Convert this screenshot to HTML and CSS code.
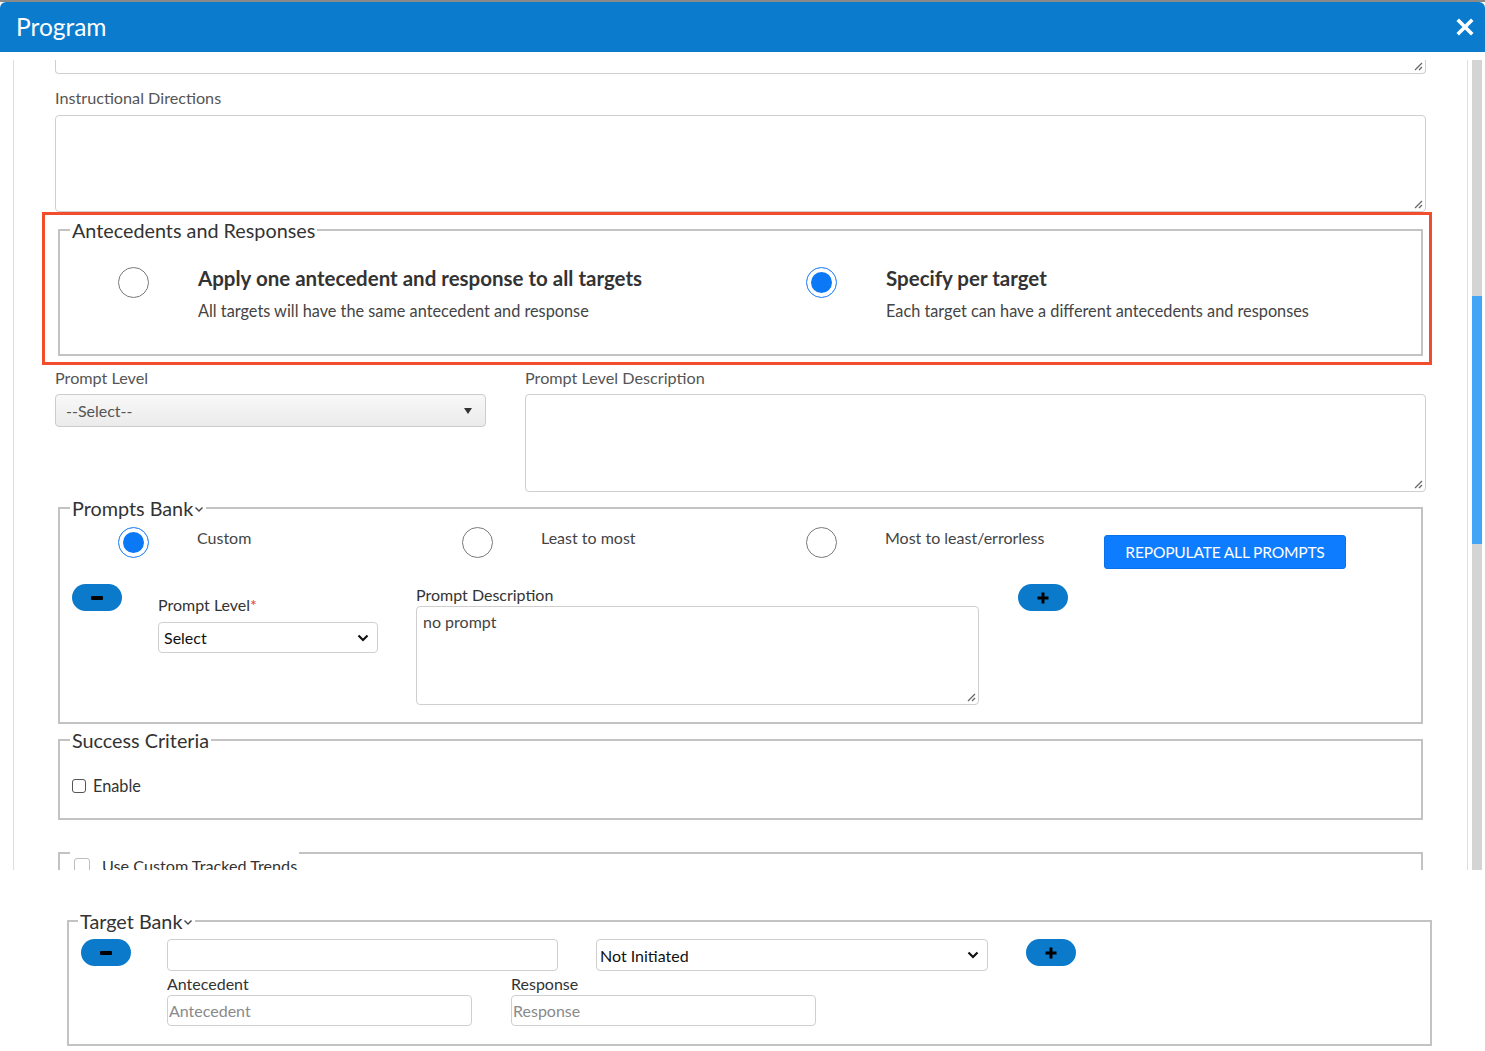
FILE: index.html
```html
<!DOCTYPE html>
<html lang="en">
<head>
<meta charset="utf-8">
<title>Program</title>
<link rel="stylesheet" href="styles.css">
</head>
<body>
<div class="top-strip"></div>
<header class="modal-header">
  <h1 class="modal-title">Program</h1>
  <button class="close-btn" aria-label="Close">
    <svg width="18" height="18" viewBox="0 0 18 18"><path d="M3 3L15 15M15 3L3 15" stroke="#fff" stroke-width="3.6" stroke-linecap="square"/></svg>
  </button>
</header>

<div class="modal-body">
  <div class="scroll-view">
    <div class="scroll-content">
      <div class="textarea partial">
        <svg class="grip" width="10" height="10" viewBox="0 0 10 10"><path d="M9 2L2 9M9 6L6 9" stroke="#666" stroke-width="1.3"/></svg>
      </div>

      <label class="field-label first">Instructional Directions</label>
      <div class="textarea directions">
        <svg class="grip" width="10" height="10" viewBox="0 0 10 10"><path d="M9 2L2 9M9 6L6 9" stroke="#666" stroke-width="1.3"/></svg>
      </div>

      <div class="highlight-wrap">
        <fieldset class="group ante">
          <legend>Antecedents and Responses</legend>
          <div class="ante-options">
            <div class="ante-option">
              <span class="radio"></span>
              <div class="ante-text">
                <div class="ante-title">Apply one antecedent and response to all targets</div>
                <div class="ante-sub">All targets will have the same antecedent and response</div>
              </div>
            </div>
            <div class="ante-option">
              <span class="radio checked"></span>
              <div class="ante-text">
                <div class="ante-title">Specify per target</div>
                <div class="ante-sub">Each target can have a different antecedents and responses</div>
              </div>
            </div>
          </div>
        </fieldset>
        <div class="highlight"></div>
      </div>

      <div class="prompt-level-row">
        <div class="pl-col">
          <label class="field-label">Prompt Level</label>
          <div class="select-grey"><span>--Select--</span><span class="tri"></span></div>
        </div>
        <div class="pld-col">
          <label class="field-label">Prompt Level Description</label>
          <div class="textarea pld">
            <svg class="grip" width="10" height="10" viewBox="0 0 10 10"><path d="M9 2L2 9M9 6L6 9" stroke="#666" stroke-width="1.3"/></svg>
          </div>
        </div>
      </div>

      <fieldset class="group prompts">
        <legend>Prompts Bank<svg class="legend-chev" width="10" height="7" viewBox="0 0 10 7"><path d="M1.5 1.5L5 5L8.5 1.5" fill="none" stroke="#444" stroke-width="1.4"/></svg></legend>
        <div class="pb-radios">
          <div class="pb-option"><span class="radio checked"></span><span class="pb-label">Custom</span></div>
          <div class="pb-option"><span class="radio"></span><span class="pb-label">Least to most</span></div>
          <div class="pb-option"><span class="radio"></span><span class="pb-label">Most to least/errorless</span></div>
          <button class="repop-btn">REPOPULATE ALL PROMPTS</button>
        </div>
        <div class="pb-row">
          <span class="pill"><span class="minus-bar"></span></span>
          <div class="pb-level">
            <label class="field-label dark">Prompt Level<span class="req">*</span></label>
            <div class="select-white small"><span>Select</span>
              <svg width="12" height="8" viewBox="0 0 12 8"><path d="M1.5 1.5L6 6L10.5 1.5" fill="none" stroke="#111" stroke-width="2.2"/></svg>
            </div>
          </div>
          <div class="pb-desc">
            <label class="field-label dark">Prompt Description</label>
            <div class="textarea desc"><span class="ta-text">no prompt</span>
              <svg class="grip" width="10" height="10" viewBox="0 0 10 10"><path d="M9 2L2 9M9 6L6 9" stroke="#666" stroke-width="1.3"/></svg>
            </div>
          </div>
          <span class="pill plus-pill">
            <svg width="12" height="12" viewBox="0 0 12 12"><path d="M6 0.5V11.5M0.5 6H11.5" stroke="#000" stroke-width="3"/></svg>
          </span>
        </div>
      </fieldset>

      <fieldset class="group success">
        <legend>Success Criteria</legend>
        <div class="check-row"><span class="checkbox"></span><span class="check-label">Enable</span></div>
      </fieldset>

      <fieldset class="group trends">
        <legend><span class="checkbox light"></span><span class="trends-label">Use Custom Tracked Trends</span></legend>
        <div class="trends-body"></div>
      </fieldset>
    </div>
  </div>
  <div class="scrollbar"><div class="thumb"></div></div>
</div>

<section class="target-section">
  <fieldset class="group target">
    <legend>Target Bank<svg class="legend-chev" width="10" height="7" viewBox="0 0 10 7"><path d="M1.5 1.5L5 5L8.5 1.5" fill="none" stroke="#444" stroke-width="1.4"/></svg></legend>
    <div class="tb-row">
      <span class="pill"><span class="minus-bar"></span></span>
      <div class="input target-name"></div>
      <div class="select-white status"><span>Not Initiated</span>
        <svg width="12" height="8" viewBox="0 0 12 8"><path d="M1.5 1.5L6 6L10.5 1.5" fill="none" stroke="#111" stroke-width="2.2"/></svg>
      </div>
      <span class="pill plus-pill">
        <svg width="12" height="12" viewBox="0 0 12 12"><path d="M6 0.5V11.5M0.5 6H11.5" stroke="#000" stroke-width="3"/></svg>
      </span>
    </div>
    <div class="tb-row2">
      <div class="tb-col">
        <label class="field-label dark">Antecedent</label>
        <div class="input ph">Antecedent</div>
      </div>
      <div class="tb-col">
        <label class="field-label dark">Response</label>
        <div class="input ph">Response</div>
      </div>
    </div>
  </fieldset>
</section>
</body>
</html>
```

FILE: styles.css
```css
* { box-sizing: border-box; }
html, body { margin: 0; padding: 0; }
body {
  width: 1485px;
  height: 1051px;
  overflow: hidden;
  background: #fff;
  font-family: Lato, "Noto Sans", sans-serif;
  color: #333;
}

.top-strip { height: 2px; background: #8a8a8a; }

.modal-header {
  height: 50px;
  background: #0a7bcd;
  border-radius: 6px 6px 0 0;
  display: flex;
  align-items: center;
  justify-content: space-between;
  padding: 0 11px 0 16px;
}
.modal-title { margin: 0; font-size: 24.5px; font-weight: 400; color: #fff; line-height: 30px; }
.close-btn { width: 18px; height: 18px; padding: 0; border: 0; background: none; display: flex; }

.modal-body { height: 818px; display: flex; overflow: hidden; }
.scroll-view {
  flex: 1;
  margin: 8px 0 0 13px;
  border-left: 1px solid #dedede;
  border-right: 1px solid #dedede;
  overflow: hidden;
}
.scroll-content { padding: 0 41px; }

.scrollbar {
  width: 10px;
  margin: 8px 3px 0 4px;
  background: #d4d4d4;
}
.thumb { margin-top: 236px; height: 248px; background: #42a5f5; }

.field-label {
  display: block;
  font-size: 16.2px;
  line-height: 20px;
  color: #555;
}
.field-label.dark { color: #333; font-size: 16px; }
.field-label.first { margin: 14px 0 7px; }
.req { color: #e53935; }

.textarea {
  position: relative;
  border: 1px solid #cfcfcf;
  border-radius: 4px;
  background: #fff;
}
.grip { position: absolute; right: 2px; bottom: 2px; }
.textarea.partial { height: 14px; border-top: 0; border-radius: 0 0 4px 4px; }
.textarea.directions { height: 97px; }

/* fieldsets */
.group {
  margin: 0 3px;
  padding: 0 10px;
  border: 2px solid #c3c3c3;
  min-width: 0;
}
.group > legend {
  padding: 0 2px;
  font-size: 19.8px;
  line-height: 24px;
  color: #333;
  display: flex;
  align-items: center;
}
.legend-chev { margin-left: 1px; margin-top: 3px; }

.highlight-wrap { position: relative; margin-top: 6px; }
.highlight {
  position: absolute;
  top: -6px; left: -13px; right: -6px; bottom: -9px;
  border: 3px solid #f24d2c;
  pointer-events: none;
}
.ante { height: 138px; }
.ante-options {
  display: grid;
  grid-template-columns: 688px 1fr;
  padding-left: 48px;
  margin-top: 25px;
}
.ante-option { display: flex; align-items: flex-start; }
.ante-text { margin-left: 49px; margin-top: -2px; }
.ante-title { font-size: 20.5px; line-height: 26px; font-weight: 700; color: #333; }
.ante-sub { font-size: 16.3px; line-height: 20px; color: #444; margin-top: 10px; }

.radio {
  flex: none;
  width: 31px; height: 31px;
  border-radius: 50%;
  border: 1.5px solid #7a7a7a;
  background: #fff;
}
.radio.checked {
  border: 1.5px solid #3b8ff7;
  background: #0b78f5;
  box-shadow: inset 0 0 0 4px #fff;
}

.prompt-level-row {
  display: grid;
  grid-template-columns: 431px 1fr;
  column-gap: 39px;
  margin-top: 12px;
}
.select-grey {
  margin-top: 6px;
  height: 33px;
  border: 1px solid #cccccc;
  border-radius: 4px;
  background: linear-gradient(#f8f8f8, #ebebeb);
  display: flex;
  align-items: center;
  justify-content: space-between;
  padding: 0 13px 0 10px;
  font-size: 16px;
  color: #555;
}
.tri {
  width: 0; height: 0;
  border-left: 4px solid transparent;
  border-right: 4px solid transparent;
  border-top: 6px solid #333;
}
.textarea.pld { margin-top: 6px; height: 98px; }

.prompts { margin-top: 4px; height: 228px; }
.pb-radios {
  display: grid;
  grid-template-columns: 344px 344px 298px auto;
  padding-left: 48px;
  margin-top: 7px;
  align-items: start;
}
.pb-option { display: flex; align-items: flex-start; }
.pb-label { margin-left: 48px; margin-top: 1px; font-size: 16px; line-height: 20px; color: #444; }
.repop-btn {
  justify-self: start;
  margin-top: 8px;
  width: 242px;
  height: 34px;
  border: 1px solid #0a72e8;
  border-radius: 3px;
  background: #0d7cff;
  color: #fff;
  font-family: inherit;
  font-size: 15.6px;
  letter-spacing: -0.2px;
  padding: 0;
}

.pill {
  flex: none;
  width: 50px; height: 27px;
  border-radius: 14px;
  background: #0b7acb;
  display: flex;
  align-items: center;
  justify-content: center;
}
.minus-bar { width: 12px; height: 4px; background: #000; border-radius: 1px; }

.pb-row { display: flex; align-items: flex-start; margin-top: 15px; padding-left: 2px; }
.pb-level { width: 220px; margin-left: 36px; padding-top: 11px; }
.select-white {
  height: 31px;
  border: 1px solid #cfcfcf;
  border-radius: 4px;
  background: #fff;
  display: flex;
  align-items: center;
  justify-content: space-between;
  padding: 0 8px 0 5px;
  font-size: 16px;
  color: #111;
}
.select-white.small { margin-top: 7px; }
.pb-desc { width: 563px; margin-left: 38px; padding-top: 1px; }
.textarea.desc { margin-top: 1px; height: 99px; padding: 5px 6px; }
.ta-text { font-size: 16px; line-height: 20px; color: #444; }
.plus-pill { margin-left: 39px; }

.success { margin-top: 4px; height: 92px; }
.check-row { display: flex; align-items: center; margin-top: 24px; padding-left: 2px; }
.checkbox {
  flex: none;
  width: 14px; height: 14px;
  border: 1px solid #555;
  border-radius: 3px;
  background: #fff;
}
.checkbox.light { width: 16px; height: 16px; border-color: #bdbdbd; margin-left: 2px; }
.check-label { margin-left: 7px; font-size: 16.3px; line-height: 20px; color: #333; }

.trends { margin-top: 10px; height: 120px; }
.trends > legend { padding-top: 26px; font-size: 16.2px; line-height: 20px; }
.trends-label { margin-left: 12px; color: #333; }

/* target bank */
.target-section { padding: 39px 0 0 67px; }
.target {
  margin: 0;
  width: 1365px;
  height: 137px;
  padding: 0 9px;
}
.tb-row { display: flex; align-items: flex-start; margin-top: 6px; padding-left: 3px; }
.input {
  height: 32px;
  border: 1px solid #cfcfcf;
  border-radius: 4px;
  background: #fff;
}
.input.target-name { width: 391px; margin-left: 36px; }
.select-white.status { width: 392px; height: 32px; margin-left: 38px; padding-left: 3px; }
.tb-row .plus-pill { margin-left: 38px; }
.tb-row2 { display: flex; gap: 39px; margin-top: 3px; padding-left: 89px; }
.tb-col { width: 305px; }
.input.ph {
  margin-top: 1px;
  height: 31px;
  font-size: 16px;
  line-height: 29px;
  color: #8a8a8a;
  padding-left: 1px;
}
```
